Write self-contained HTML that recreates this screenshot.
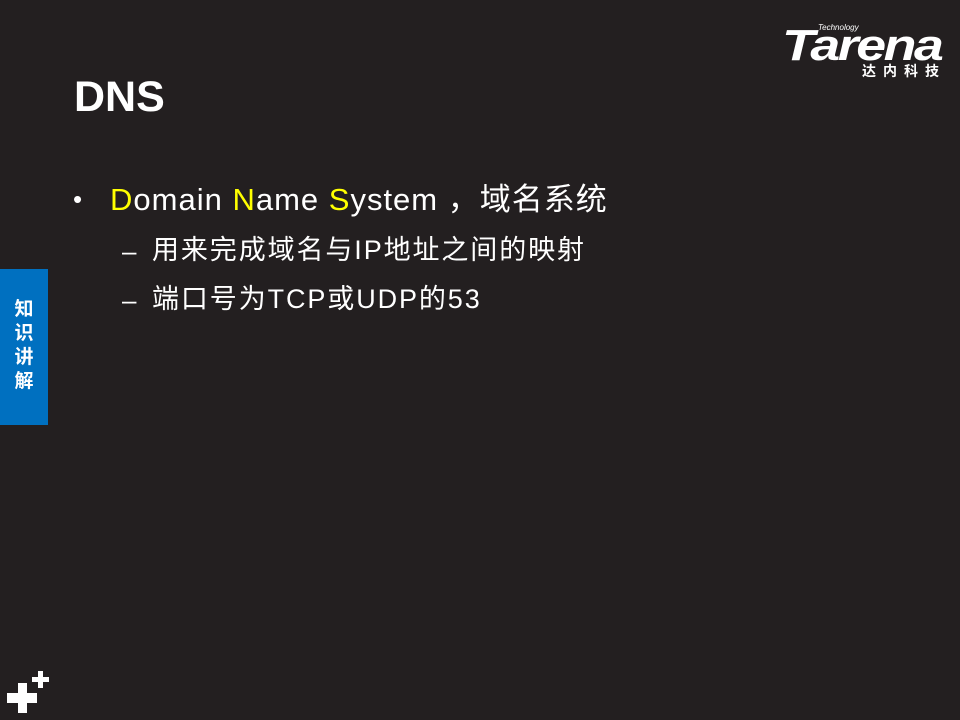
<!DOCTYPE html>
<html><head><meta charset="utf-8"><style>
body{margin:0;width:960px;height:720px;background:#231f20;position:relative;overflow:hidden;font-family:"Liberation Sans","Noto Sans CJK SC",sans-serif;color:#fff}
.a{position:absolute;white-space:nowrap;line-height:1}
.y{color:#ffff00}
</style></head><body>
<div class="a" style="left:74px;top:76px;font-size:43px;font-weight:bold">DNS</div>
<div class="a" style="left:73px;top:186px;font-size:26px">•</div>
<div class="a" style="left:110px;top:184px;font-size:31px;letter-spacing:1px"><span class="y">D</span>omain <span class="y">N</span>ame <span class="y">S</span>ystem ，域名系统</div>
<div class="a" style="left:122px;top:238px;font-size:26px">–</div>
<div class="a" style="left:152px;top:237px;font-size:27px;letter-spacing:1.9px">用来完成域名与IP地址之间的映射</div>
<div class="a" style="left:122px;top:287px;font-size:26px">–</div>
<div class="a" style="left:152px;top:286px;font-size:27px;letter-spacing:1.9px">端口号为TCP或UDP的53</div>
<div class="a" style="left:0;top:269px;width:48px;height:156px;background:#0070c0"></div>
<div class="a" style="left:12px;top:298px;width:24px;font-size:19px;font-weight:bold;line-height:24px;text-align:center;white-space:normal">知<br>识<br>讲<br>解</div>
<div class="a" style="left:7px;top:693px;width:30px;height:10px;background:#fff"></div>
<div class="a" style="left:18px;top:683px;width:9px;height:30px;background:#fff"></div>
<div class="a" style="left:32px;top:677px;width:17px;height:5px;background:#fff"></div>
<div class="a" style="left:38px;top:671px;width:5px;height:17px;background:#fff"></div>
<div class="a" style="left:782px;top:24px;font-size:44px;font-weight:bold;font-style:italic;letter-spacing:-2px;transform:scaleX(1.22);transform-origin:left">Tarena</div>
<div class="a" style="left:818px;top:24px;font-size:8px;font-style:italic">Technology</div>
<div class="a" style="left:862px;top:64px;font-size:14px;font-weight:bold;letter-spacing:7px">达内科技</div>
</body></html>
